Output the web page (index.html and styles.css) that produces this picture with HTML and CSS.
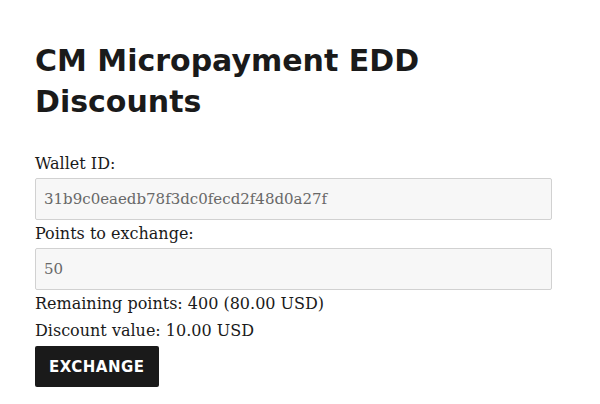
FILE: index.html
```html
<!DOCTYPE html>
<html>

<head>
  <meta charset="UTF-8">
  <title>CM Micropayment EDD Discounts</title>
  <link rel="stylesheet" href="styles.css">
</head>

<body>
  <div class="widget">
    <h1>CM Micropayment EDD Discounts</h1>

    <form class="exchange-form">
      <label for="wallet-id">Wallet ID:</label>
      <input type="text" id="wallet-id" value="31b9c0eaedb78f3dc0fecd2f48d0a27f" readonly>

      <label for="points">Points to exchange:</label>
      <input type="text" id="points" value="50">

      <p class="info">Remaining points: 400 (80.00 USD)</p>
      <p class="info">Discount value: 10.00 USD</p>

      <button type="button" class="btn-exchange">Exchange</button>
    </form>
  </div>
</body>

</html>
```

FILE: styles.css
```css
* {
  margin: 0;
  padding: 0;
  box-sizing: border-box;
}

body {
  background-color: #fff;
  color: #1a1a1a;
  font-family: 'DejaVu Serif', 'Liberation Serif', serif;
  font-size: 16px;
  line-height: 27px;
  padding: 40px 35px 0;
}

.widget {
  width: 517px;
}

h1 {
  font-family: 'DejaVu Sans', 'Liberation Sans', sans-serif;
  font-weight: bold;
  font-size: 30px;
  line-height: 41px;
  color: #1a1a1a;
  margin-bottom: 28px;
}

.exchange-form {
  display: flex;
  flex-direction: column;
  align-items: flex-start;
}

label {
  display: block;
  line-height: 28px;
}

input {
  width: 100%;
  height: 42px;
  padding: 0 8px;
  border: 1px solid #d1d1d1;
  border-radius: 2px;
  background-color: #f7f7f7;
  color: #686868;
  font-family: inherit;
  font-size: 15px;
}

.btn-exchange {
  margin-top: 2px;
  padding: 0 14px;
  height: 41px;
  border: none;
  border-radius: 2px;
  background-color: #1a1a1a;
  color: #fff;
  font-family: 'DejaVu Sans', 'Liberation Sans', sans-serif;
  font-weight: bold;
  font-size: 15px;
  letter-spacing: 0.5px;
  text-transform: uppercase;
  cursor: pointer;
}
```
